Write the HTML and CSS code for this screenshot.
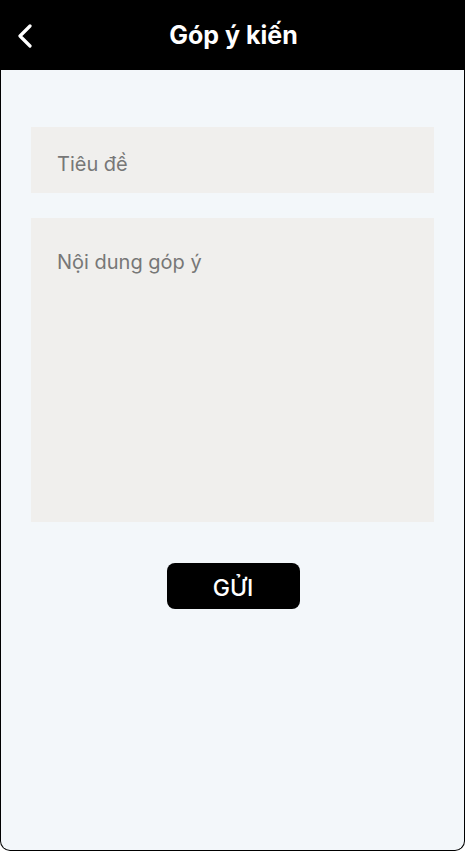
FILE: index.html
```html
<!DOCTYPE html>
<html lang="vi">
<head>
<meta charset="utf-8">
<link rel="stylesheet" href="styles.css">
</head>
<body>
<div class="screen">
  <header class="topbar">
    <button class="back" aria-label="Quay lại">
      <svg width="16" height="24" viewBox="0 0 16 24"><path d="M13 2 L3 12 L13 22" fill="none" stroke="#fff" stroke-width="3.2" stroke-linecap="round" stroke-linejoin="round"/></svg>
    </button>
    <h1 class="title">Góp ý kiến</h1>
  </header>
  <main class="content">
    <div class="field">Tiêu đề</div>
    <div class="field area">Nội dung góp ý</div>
    <div class="actions"><button class="send">GỬI</button></div>
  </main>
</div>
</body>
</html>
```
FILE: styles.css
```css
html, body { margin: 0; padding: 0; background: #fff; }
body { font-family: Inter, "Noto Sans", sans-serif; }
.screen {
  box-sizing: border-box;
  width: 465px;
  height: 851px;
  border: 1px solid #000;
  border-top: none;
  border-radius: 0 0 10px 10px;
  background: #f3f7fa;
  overflow: hidden;
  display: flex;
  flex-direction: column;
}
.topbar {
  height: 70px;
  background: #000;
  display: flex;
  align-items: center;
  justify-content: center;
  position: relative;
  flex: none;
}
.back {
  position: absolute;
  left: 14px;
  top: 23px;
  background: none;
  border: none;
  padding: 0;
  width: 20px;
  height: 26px;
  display: flex;
  align-items: center;
  justify-content: center;
}
.title {
  margin: 0;
  color: #fff;
  font-size: 25px;
  font-weight: 700;
  padding-left: 2px;
}
.content {
  padding: 57px 30px 0 30px;
  display: flex;
  flex-direction: column;
  gap: 25px;
}
.field {
  background: #f0efed;
  height: 66px;
  box-sizing: border-box;
  padding: 8px 26px 0;
  display: flex;
  align-items: center;
  color: #777;
  font-size: 20px;
}
.field.area {
  height: 304px;
  align-items: flex-start;
  padding-top: 32px;
}
.actions {
  display: flex;
  justify-content: center;
  padding-top: 16px;
}
.send {
  width: 133px;
  height: 46px;
  background: #000;
  color: #fff;
  border: none;
  border-radius: 8px;
  font-family: Inter, "Noto Sans", sans-serif;
  font-size: 23px;
  font-weight: 500;
  padding: 4px 0 0;
  margin-left: 1px;
}
```
